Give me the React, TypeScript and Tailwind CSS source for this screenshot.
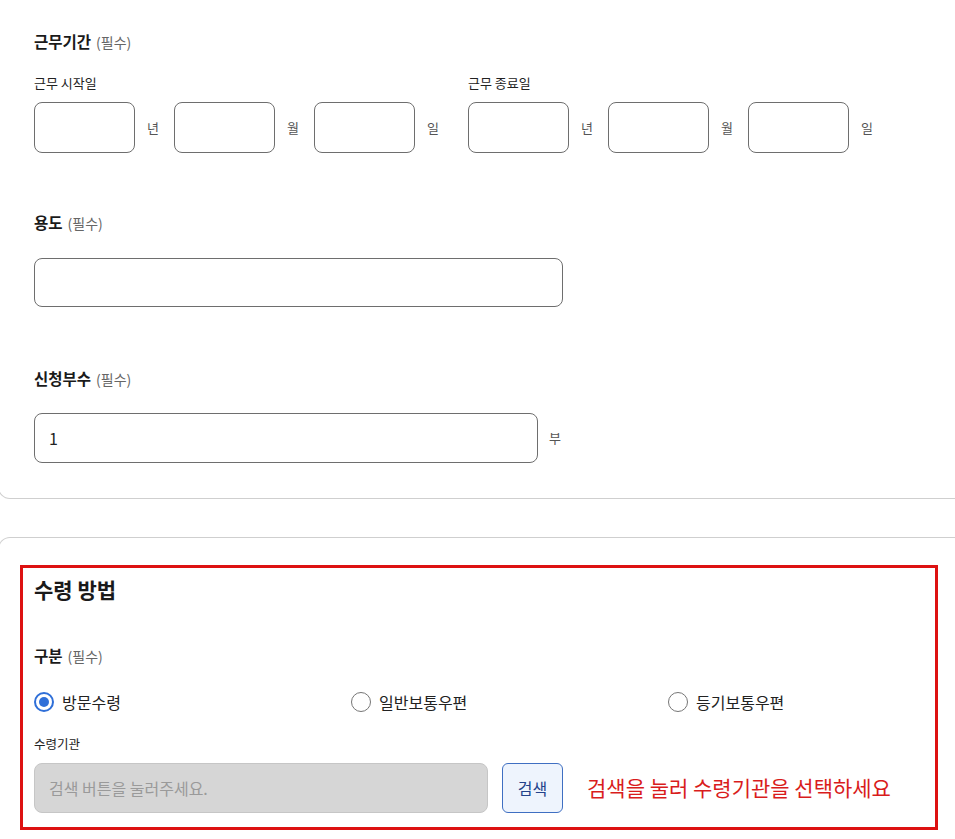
import { ReactNode } from "react";

const FONT = { fontFamily: '"Noto Sans CJK KR", "Noto Sans", sans-serif' };

const boxInput =
  "rounded-lg border border-[#6e6e6e] bg-white outline-none text-[16px] text-[#222] px-[14px]";

function Title({ children }: { children: ReactNode }) {
  return (
    <p className="flex h-[20px] items-baseline text-[15.5px] leading-[20px] font-bold text-[#1a1a1a]">
      {children}
      <span className="ml-[5px] text-[14px] font-normal text-[#666]">(필수)</span>
    </p>
  );
}

function DateGroup({ label }: { label: string }) {
  return (
    <div>
      <p className="text-[13px] leading-[16px] text-[#222]">{label}</p>
      <div className="mt-[11px] flex items-center">
        {["년", "월", "일"].map((u) => (
          <div key={u} className="flex items-center">
            <input className={`${boxInput} h-[51px] w-[101px]`} />
            <span className="w-[39px] pl-3 text-[13px] text-[#555]">{u}</span>
          </div>
        ))}
      </div>
    </div>
  );
}

function Radio({ label, checked }: { label: string; checked?: boolean }) {
  return (
    <label className="flex w-[317px] shrink-0 items-center gap-[8px]">
      {checked ? (
        <span className="flex h-[20px] w-[20px] items-center justify-center rounded-full border-2 border-[#2f6fd8]">
          <span className="h-[10px] w-[10px] rounded-full bg-[#2f6fd8]" />
        </span>
      ) : (
        <span className="h-[20px] w-[20px] rounded-full border border-[#767676]" />
      )}
      <span className="text-[16px] leading-[20px] text-[#222]">{label}</span>
    </label>
  );
}

export default function App() {
  return (
    <div className="relative h-[839px] w-[955px] overflow-hidden bg-white" style={FONT}>
      {/* upper card, its top is scrolled off screen */}
      <section className="ml-[-2px] w-[1000px] rounded-b-xl border border-t-0 border-[#cfcfcf] pl-[35px] pt-[31px] pb-[35px]">
        <Title>근무기간</Title>
        <div className="mt-[24px] flex gap-[14px]">
          <DateGroup label="근무 시작일" />
          <DateGroup label="근무 종료일" />
        </div>

        <div className="mt-[59px]">
          <Title>용도</Title>
        </div>
        <input className={`${boxInput} mt-[26px] h-[49px] w-[529px]`} />

        <div className="mt-[61px]">
          <Title>신청부수</Title>
        </div>
        <div className="mt-[25px] flex items-center">
          <input defaultValue="1" className={`${boxInput} h-[50px] w-[504px]`} />
          <span className="ml-[11px] text-[13px] text-[#555]">부</span>
        </div>
      </section>

      {/* lower card */}
      <section className="ml-[-2px] mt-[38px] w-[1000px] rounded-t-xl border border-b-0 border-[#cfcfcf] pl-[21px] pt-[27px]">
        <div className="w-[918px] border-[3px] border-[#dd1111] pl-[11px] pt-[7px] pb-[14px]">
          <h2 className="text-[21px] leading-[28px] font-bold text-[#1a1a1a]">수령 방법</h2>

          <div className="mt-[42px]">
            <Title>구분</Title>
          </div>
          <div className="mt-[27px] flex">
            <Radio label="방문수령" checked />
            <Radio label="일반보통우편" />
            <Radio label="등기보통우편" />
          </div>

          <p className="mt-[24px] text-[12.5px] leading-[16px] text-[#222]">수령기관</p>
          <div className="mt-[11px] flex items-center">
            <input
              disabled
              placeholder="검색 버튼을 눌러주세요."
              className="h-[50px] w-[454px] rounded-lg border border-[#c6c6c6] bg-[#d6d6d6] px-[14px] text-[16px] outline-none placeholder:text-[#9a9a9a]"
            />
            <button className="ml-[14px] h-[50px] w-[61px] rounded-md border border-[#3f6fc2] bg-[#eef4fd] text-[16px] text-[#23428a]">
              검색
            </button>
            <span className="ml-[24px] text-[21px] text-[#d91c1c]">
              검색을 눌러 수령기관을 선택하세요
            </span>
          </div>
        </div>
      </section>
    </div>
  );
}
